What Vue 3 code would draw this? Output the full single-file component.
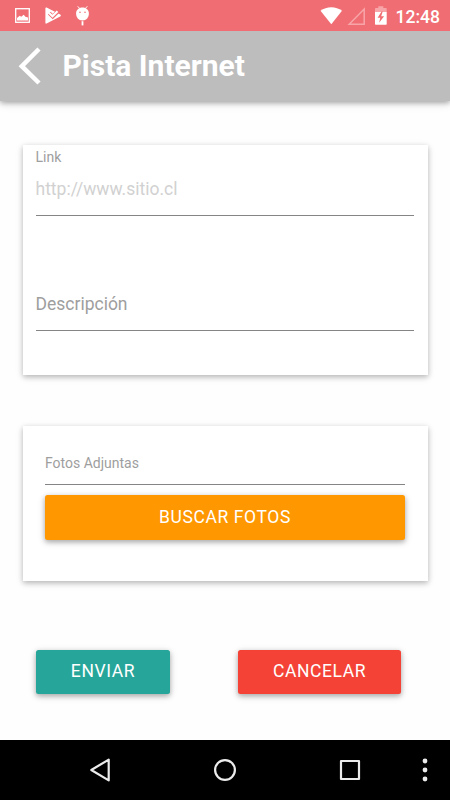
<template>
  <div class="screen">
    <!-- barra de estado -->
    <div class="status-bar">
      <svg class="status-left" width="100" height="31" viewBox="0 0 100 31">
        <rect x="15.7" y="8.7" width="13.6" height="13.6" fill="none" stroke="#fff" stroke-width="1.3" />
        <path d="M17 20.5V18l2.7-2.2 1.5 1 2.5-2 1.7 2 2.6.8v2.9z" fill="#fff" />
        <path
          d="M46.6 7.6l13.6 7c.9.5.9 1.3 0 1.8l-13.6 7.2c-.8.4-1.2 0-1.2-.8V8.4c0-.8.4-1.2 1.2-.8z"
          fill="#fff"
        />
        <path d="M49.3 13.2l3.4 3.4 6.3-6.3" fill="none" stroke="#f06e73" stroke-width="3.8" />
        <path d="M48.8 12.7l3.7 3.6 5-5" fill="none" stroke="#fff" stroke-width="2.2" />
        <path d="M77.7 6.3l2.3 2.5M87.3 6.3L85 8.8" stroke="#fff" stroke-width="1" />
        <path d="M82.5 7.6c3.7 0 6.4 2.5 6.4 5.8 0 3.7-2.4 7-6.4 7s-6.4-3.3-6.4-7c0-3.3 2.7-5.8 6.4-5.8z" fill="#fff" />
        <circle cx="80" cy="12.3" r=".8" fill="#f06e73" />
        <circle cx="85" cy="12.3" r=".8" fill="#f06e73" />
        <path d="M82.5 21.2v4.2" stroke="#fff" stroke-width="1.8" />
      </svg>
      <div class="status-right">
        <svg width="76" height="31" viewBox="0 0 76 31">
          <path d="M.5 10.8C6.5 5.9 16.1 5.9 22 10.8L11.3 24.3z" fill="#fff" />
          <path d="M29.2 24.2L44.2 9v15.2z" fill="none" stroke="#f7a5a9" stroke-width="1.5" />
          <path d="M55 12V9c0-.6.3-1 1-1h2.3V6.2h5V8h2.4c.7 0 1 .4 1 1v3z" fill="#f7a5a9" />
          <path d="M55 12h11.7v11.8c0 .6-.3 1-1 1H56c-.7 0-1-.4-1-1z" fill="#fff" />
          <path d="M61.6 11.5l-4 6.2h2.7l-1.2 5 5-6.4h-2.9l1.5-4.8z" fill="#f06e73" />
        </svg>
        <span class="clock">12:48</span>
      </div>
    </div>

    <header class="toolbar">
      <svg class="back" width="24" height="42" viewBox="0 0 24 42">
        <path d="M21 4L3.8 21.2 21 38" fill="none" stroke="#fff" stroke-width="4.5" />
      </svg>
      <h1>Pista Internet</h1>
    </header>

    <main class="content">
      <section class="card link-card">
        <div class="field link-field">
          <label>Link</label>
          <span class="hint">http://www.sitio.cl</span>
        </div>
        <div class="field description-field">
          <span>Descripción</span>
        </div>
      </section>

      <section class="card photo-card">
        <div class="photo-label">Fotos Adjuntas</div>
        <button class="btn search">BUSCAR FOTOS</button>
      </section>

      <div class="actions">
        <button class="btn send">ENVIAR</button>
        <button class="btn cancel">CANCELAR</button>
      </div>
    </main>

    <!-- botones de navegación de Android -->
    <nav class="nav-bar">
      <svg width="450" height="60" viewBox="0 0 450 60" fill="none" stroke="#ececec" stroke-width="2.2">
        <path d="M91.3 30l17.4-10.4v20.8z" stroke-linejoin="round" />
        <circle cx="225" cy="30" r="9.9" />
        <rect x="341" y="21" width="18" height="18" stroke-linejoin="round" />
        <g fill="#ececec" stroke="none">
          <circle v-for="y in dots" :key="y" cx="425" :cy="y" r="2.4" />
        </g>
      </svg>
    </nav>
  </div>
</template>

<script setup>
// posición vertical de los puntos del menú
const dots = [21, 30, 39]
</script>

<style>
body {
  margin: 0;
  background: #fff;
}
</style>

<style scoped>
.screen {
  width: 450px;
  height: 800px;
  display: flex;
  flex-direction: column;
  overflow: hidden;
  background: #fefefe;
  font-family: Roboto, 'Liberation Sans', sans-serif;
}

.status-bar {
  height: 31px;
  display: flex;
  justify-content: space-between;
  background: #f06e73;
}

.status-right {
  display: flex;
  padding-right: 10px;
}

.clock {
  color: #fff;
  font-size: 17.5px;
  font-weight: 500;
  line-height: 34px;
}

.toolbar {
  height: 70px;
  display: flex;
  align-items: center;
  gap: 20.5px;
  padding-left: 18px;
  box-sizing: border-box;
  background: #bdbdbd;
  box-shadow: 0 2px 5px rgba(0, 0, 0, 0.28), 0 2px 10px rgba(0, 0, 0, 0.12);
  /* la sombra no debe caer sobre la barra de estado */
  clip-path: inset(0 0 -20px 0);
}

.toolbar h1 {
  margin: 0;
  color: #fff;
  font-size: 30px;
  font-weight: 700;
  line-height: 70px;
}

.content {
  flex: 1;
  padding: 44px 22.5px 0;
}

.card {
  box-sizing: border-box;
  background: #fff;
  box-shadow: 0 2px 5px rgba(0, 0, 0, 0.2), 0 2px 8px rgba(0, 0, 0, 0.12);
}

.link-card {
  height: 230px;
  padding: 0 13.5px 0 13px;
}

.field {
  display: flex;
  flex-direction: column;
  box-sizing: border-box;
  color: #9e9e9e;
  font-size: 17.5px;
  border-bottom: 1px solid #858585;
}

.link-field {
  height: 71px;
  padding-top: 3px;
}

.link-field label {
  font-size: 14px;
  line-height: 18px;
}

.hint {
  margin-top: 11px;
  color: #d1d1d1;
  line-height: 24px;
}

.description-field {
  height: 115px;
  padding-top: 76px;
  line-height: 24px;
}

.photo-card {
  height: 154.5px;
  margin-top: 51px;
  padding: 27px 22.5px 0;
}

.photo-label {
  height: 31px;
  margin-bottom: 10px;
  border-bottom: 1px solid #858585;
  color: #9e9e9e;
  font-size: 14px;
  line-height: 21px;
}

.btn {
  display: block;
  height: 45px;
  padding: 0 0 1px;
  border: none;
  border-radius: 2.5px;
  color: #fff;
  font-family: inherit;
  font-size: 17.5px;
  letter-spacing: 0.6px;
  box-shadow: 0 2px 5px rgba(0, 0, 0, 0.26), 0 2px 8px rgba(0, 0, 0, 0.14);
}

.search {
  width: 100%;
  background: #ff9800;
}

.actions {
  display: flex;
  gap: 68px;
  margin-top: 69px;
  padding-left: 13.5px;
}

.send,
.cancel {
  height: 44.5px;
}

.send {
  width: 134px;
  background: #26a69a;
}

.cancel {
  width: 163px;
  background: #f44336;
}

.nav-bar {
  height: 60px;
  background: #000;
}
</style>
